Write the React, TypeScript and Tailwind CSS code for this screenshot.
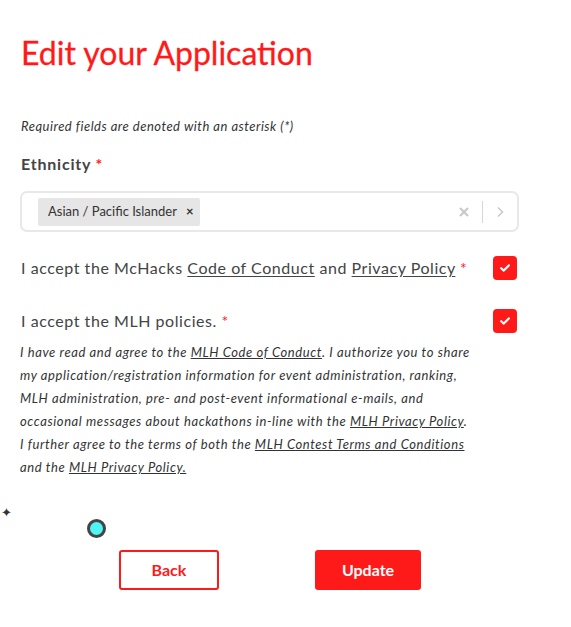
import React from 'react'

const RED = 'text-[#ff1a1a]'

function Check() {
  return (
    <div className="w-6 h-6 rounded-[4px] bg-[#ff1a1a] flex items-center justify-center shrink-0">
      <svg width="10" height="8" viewBox="0 0 10 8">
        <path d="M1.2 4.2 L3.8 6.6 L8.8 1.4" stroke="white" strokeWidth="2.2" fill="none" strokeLinecap="round" strokeLinejoin="round" />
      </svg>
    </div>
  )
}

export default function App() {
  return (
    <div className="relative w-[571px] h-[627px] bg-white text-[#444] font-['Lato',sans-serif]">
      <div className="pl-[21px] pt-[33px] w-[519px]">
        {/* Title */}
        <h1 className={`text-[32px] leading-[40px] ${RED} [-webkit-text-stroke:0.3px_#ff1a1a]`}>Edit your Application</h1>

        <p className="mt-[45px] text-[13px] italic text-[#333] leading-[16px] tracking-[0.5px]">
          Required fields are denoted with an asterisk (*)
        </p>

        <div className="mt-[20px] text-[16px] font-bold text-[#444] leading-[20px] tracking-[0.8px]">
          Ethnicity <span className={RED}>*</span>
        </div>

        {/* Select */}
        <div className="mt-[17px] -ml-[1px] h-[41px] border-2 border-[#e8e8e8] rounded-[7px] flex items-center pl-[16px] pr-[8px]">
          <div className="h-[28px] bg-[#e6e6e6] rounded-[2px] flex items-center pl-[10px] pr-[7px] gap-[9px] text-[13px] text-[#333]">
            <span>Asian / Pacific Islander</span>
            <span className="text-[13px] font-bold">×</span>
          </div>
          <div className="flex-1" />
          <svg width="12" height="12" viewBox="0 0 12 12" className="mr-[12px]">
            <path d="M2 2 L10 10 M10 2 L2 10" stroke="#c8c8c8" strokeWidth="2" />
          </svg>
          <div className="w-px h-[22px] bg-[#d6d6d6]" />
          <svg width="10" height="12" viewBox="0 0 10 12" className="ml-[12px] mr-[4px]">
            <path d="M3 1.5 L7.5 6 L3 10.5" stroke="#c8c8c8" strokeWidth="1.5" fill="none" />
          </svg>
        </div>

        {/* McHacks */}
        <div className="mt-[24px] flex items-center justify-between pr-[2px]">
          <span className="text-[16px] leading-[20px] tracking-[0.55px]">
            I accept the McHacks <span className="underline underline-offset-2">Code of Conduct</span> and{' '}
            <span className="underline underline-offset-2">Privacy Policy</span> <span className={RED}>*</span>
          </span>
          <Check />
        </div>

        {/* MLH */}
        <div className="mt-[29px] flex items-center justify-between pr-[2px]">
          <span className="text-[16px] leading-[20px] tracking-[0.55px]">
            I accept the MLH policies. <span className={RED}>*</span>
          </span>
          <Check />
        </div>

        <p className="mt-[8px] -ml-[1px] w-[490px] text-[13px] italic leading-[23px] text-[#333] tracking-[0.6px]">
          I have read and agree to the <span className="underline">MLH Code of Conduct</span>. I authorize you to share
          <br />
          my application/registration information for event administration, ranking,
          <br />
          MLH administration, pre- and post-event informational e-mails, and
          <br />
          occasional messages about hackathons in-line with the <span className="underline">MLH Privacy Policy</span>.
          <br />
          I further agree to the terms of both the <span className="underline">MLH Contest Terms and Conditions</span>
          <br />
          and the <span className="underline">MLH Privacy Policy.</span>
        </p>
      </div>

      {/* decorations */}
      <span className="absolute left-[1px] top-[503px] text-[13px] text-[#333]">✦</span>
      <div className="absolute left-[87px] top-[519px] w-[19px] h-[19px] rounded-full bg-[#4ff5f5] border-[3px] border-[#444]" />

      {/* Buttons */}
      <div className="absolute left-0 top-[550px] w-full">
        <div className="flex">
          <button className="ml-[119px] w-[100px] h-[40px] border-2 border-[#ff1a1a] rounded-[3px] text-[#ff1a1a] text-[16px] font-bold">
            Back
          </button>
          <button className="ml-[96px] w-[106px] h-[40px] bg-[#ff1a1a] rounded-[3px] text-white text-[16px] font-bold">
            Update
          </button>
        </div>
      </div>
    </div>
  )
}
